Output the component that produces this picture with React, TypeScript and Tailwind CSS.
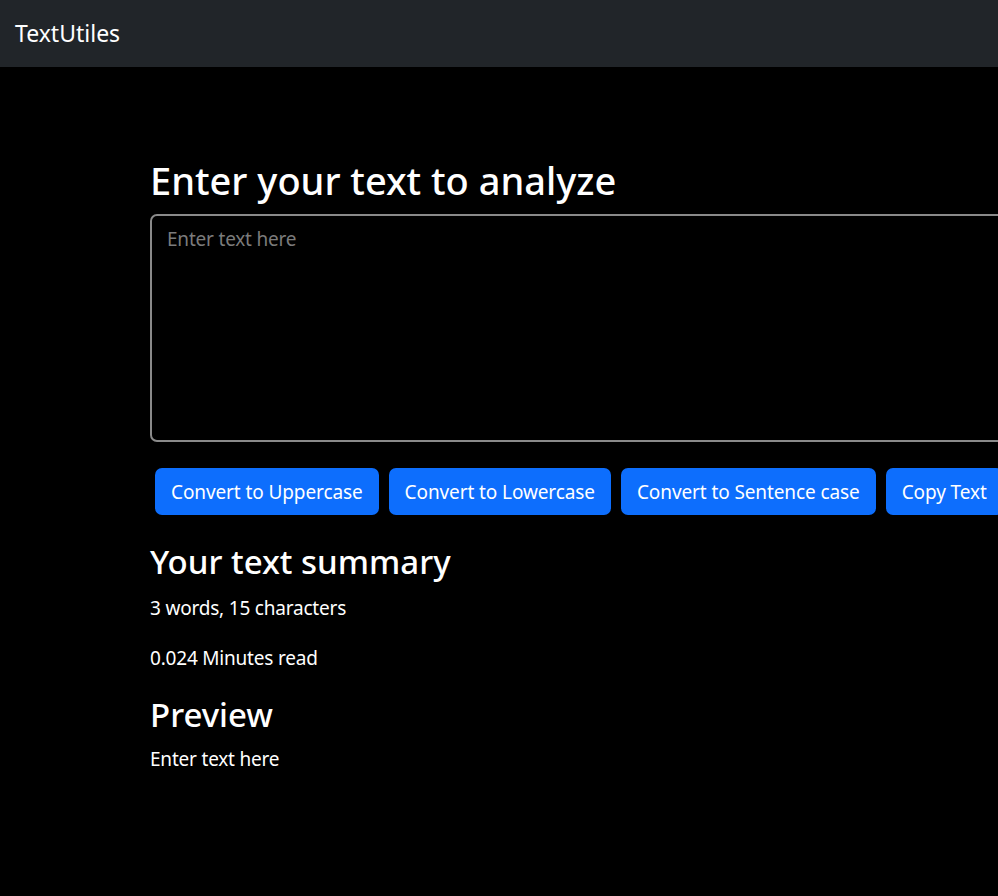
export default function App() {
  const buttons = [
    "Convert to Uppercase",
    "Convert to Lowercase",
    "Convert to Sentence case",
    "Copy Text",
  ];

  return (
    <div
      className="min-h-screen w-full overflow-hidden bg-black text-white"
      style={{ fontFamily: '"Noto Sans", "Open Sans", sans-serif' }}
    >
      <nav className="h-[67px] bg-[#212529] pl-[15px]">
        <span className="text-[23px] leading-[67px] text-white">TextUtiles</span>
      </nav>

      <div className="pl-[150px] pt-[90px]">
        <h1 className="text-[38px] leading-[47px] font-medium">Enter your text to analyze</h1>
        <textarea
          className="mt-[10px] block h-[228px] w-[1100px] resize-none rounded-[7px] border-2 border-[#8a8a8a] bg-black px-[15px] pt-[8px] text-[19px] leading-[30px] tracking-[-0.2px] text-white outline-none placeholder:text-[#7b7b7b]"
          placeholder="Enter text here"
        />

        <div className="mt-[26px] flex gap-[10px] pl-[5px]">
          {buttons.map((b) => (
            <button
              key={b}
              className="h-[47px] shrink-0 whitespace-nowrap rounded-[7px] bg-[#0d6efd] px-4 text-[19px] leading-[30px] tracking-[-0.1px] text-white"
            >
              {b}
            </button>
          ))}
        </div>

        <h2 className="mt-[26px] text-[33px] leading-[42px] font-medium">Your text summary</h2>
        <p className="mt-[10px] text-[19px] leading-[30px] tracking-[-0.2px]">3 words, 15 characters</p>
        <p className="mt-[20px] text-[19px] leading-[30px] tracking-[-0.2px]">0.024 Minutes read</p>

        <h2 className="mt-[21px] text-[33px] leading-[42px] font-medium">Preview</h2>
        <p className="mt-[8px] text-[19px] leading-[30px] tracking-[-0.2px]">Enter text here</p>
      </div>
    </div>
  );
}
